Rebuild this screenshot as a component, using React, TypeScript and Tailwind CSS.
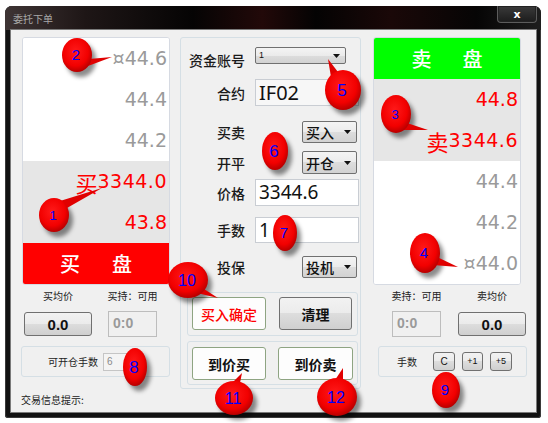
import React from "react";

const CJK = "font-['Noto_Sans_CJK_SC',sans-serif]";
const NUM = "font-['DejaVu_Sans',sans-serif]";

function Arrow() {
  return (
    <svg width="7" height="4" viewBox="0 0 7 4" className="shrink-0">
      <path d="M0 0h7L3.5 4z" fill="#111" />
    </svg>
  );
}

function Combo({ text, cls, textCls }: { text: string; cls: string; textCls: string }) {
  return (
    <div
      className={`flex items-center justify-between border border-[#707070] rounded-[2px] bg-[linear-gradient(#f4f4f4,#ebebeb_50%,#dddddd_50%,#d2d2d2)] pl-[3px] pr-[5px] ${cls}`}
    >
      <span className={textCls}>{text}</span>
      <Arrow />
    </div>
  );
}

function PriceRow({ children, bg }: { children: React.ReactNode; bg: string }) {
  return (
    <div className={`h-[41px] flex items-center justify-end pr-[2px] ${bg}`}>{children}</div>
  );
}

function GrayBtn({ children, cls }: { children: React.ReactNode; cls: string }) {
  return (
    <div
      className={`flex items-center justify-center border border-[#707070] rounded-[3px] bg-[linear-gradient(#f2f2f2,#ebebeb_50%,#dddddd_50%,#cfcfcf)] ${cls}`}
    >
      {children}
    </div>
  );
}

type B = {
  cx: number;
  cy: number;
  rx: number;
  ry: number;
  n: string;
  fs: number;
  tail?: string;
};

const badges: B[] = [
  { cx: 54, cy: 215, rx: 15, ry: 17, n: "1", fs: 13, tail: "60,201 67,208 102,188" },
  { cx: 77, cy: 55, rx: 15, ry: 17, n: "2", fs: 15, tail: "89,59 88,66 112,57" },
  { cx: 396, cy: 114, rx: 15, ry: 19, n: "3", fs: 13, tail: "407,123 403,130 428,130" },
  { cx: 425, cy: 253, rx: 15, ry: 20, n: "4", fs: 15, tail: "437,257 433,265 458,267" },
  { cx: 343, cy: 90, rx: 18, ry: 20, n: "5", fs: 17, tail: "331,77 338,72 328,59" },
  { cx: 275, cy: 151, rx: 13, ry: 19, n: "6", fs: 17 },
  { cx: 285, cy: 233, rx: 12, ry: 18, n: "7", fs: 15 },
  { cx: 135, cy: 367, rx: 12, ry: 19, n: "8", fs: 17 },
  { cx: 446, cy: 390, rx: 14, ry: 18, n: "9", fs: 15 },
  { cx: 188, cy: 280, rx: 20, ry: 18, n: "10", fs: 16, tail: "197,293 204,289 218,298" },
  { cx: 234, cy: 398, rx: 19, ry: 17, n: "11", fs: 16, tail: "233,382 240,383 242,373" },
  { cx: 337, cy: 397, rx: 20, ry: 19, n: "12", fs: 16, tail: "335,380 343,380 343,368" },
];

function Badges() {
  return (
    <svg
      className="absolute left-0 top-0 pointer-events-none"
      width="548"
      height="423"
      viewBox="0 0 548 423"
    >
      <defs>
        <radialGradient id="rg" cx="45%" cy="40%" r="60%">
          <stop offset="0%" stopColor="#ff1a1a" />
          <stop offset="70%" stopColor="#f20000" />
          <stop offset="100%" stopColor="#b80000" />
        </radialGradient>
        <filter id="blur" x="-50%" y="-50%" width="200%" height="200%">
          <feGaussianBlur stdDeviation="2.2" />
        </filter>
      </defs>
      {badges.map((b) => (
        <g key={b.n}>
          <ellipse
            cx={b.cx + 4}
            cy={b.cy + 5}
            rx={b.rx}
            ry={b.ry}
            fill="rgba(0,0,0,0.45)"
            filter="url(#blur)"
          />
          {b.tail && <polygon points={b.tail} fill="#e00000" />}
          <ellipse cx={b.cx} cy={b.cy} rx={b.rx} ry={b.ry} fill="url(#rg)" />
          <text
            x={b.cx - 1}
            y={b.cy + b.fs * 0.36}
            textAnchor="middle"
            fontSize={b.fs}
            fill="#0000ff"
            fontFamily="Liberation Sans, Arial, sans-serif"
          >
            {b.n}
          </text>
        </g>
      ))}
    </svg>
  );
}

export default function App() {
  return (
    <div className="relative w-[548px] h-[423px] bg-white overflow-hidden">
      <div className="pt-[6px] pl-[5px]">
        <div className="w-[536px] h-[412px] rounded-t-[7px] rounded-b-[3px] bg-[#121212] flex flex-col shadow-[inset_0_0_0_1px_#3a3a3a]">
          {/* title bar */}
          <div className="h-[24px] flex items-start justify-between rounded-t-[7px] bg-[linear-gradient(90deg,#3e3434_0%,#1e1616_15%,#050404_35%,#220909_48%,#040303_58%,#1a0808_72%,#060505_88%,#1e1e1e_100%)]">
            <span className={`${CJK} text-[10px] leading-none text-[#a8a8a8] ml-[8px] mt-[8px]`}>
              委托下单
            </span>
            <div className="mr-[4px] w-[40px] h-[17px] rounded-b-[4px] border border-t-0 border-[#5c5c5c] bg-[linear-gradient(#3a3a3a,#1c1c1c)] flex items-center justify-center shadow-[inset_0_0_0_1px_#222]">
              <span className="font-['DejaVu_Sans',sans-serif] text-[11px] font-bold text-white leading-none">
                x
              </span>
            </div>
          </div>
          {/* client */}
          <div className="ml-[6px] w-[525px] h-[382px] bg-[#f0f0f0] shadow-[0_0_0_1px_#7a7a7a] flex pt-[7px] pl-[10px]">
            {/* left column */}
            <div className="w-[149px] flex flex-col">
              <div className="ml-[1px] w-[148px] h-[248px] border border-[#d6dae2] rounded-[3px] bg-white flex flex-col overflow-hidden">
                <PriceRow bg="bg-white">
                  <span className={`${NUM} text-[19px] text-[#9a9a9a] leading-none`}>¤44.6</span>
                </PriceRow>
                <PriceRow bg="bg-white">
                  <span className={`${NUM} text-[19px] text-[#9a9a9a] leading-none`}>44.4</span>
                </PriceRow>
                <PriceRow bg="bg-white">
                  <span className={`${NUM} text-[19px] text-[#9a9a9a] leading-none`}>44.2</span>
                </PriceRow>
                <PriceRow bg="bg-[#e6e6e6]">
                  <span className={`${CJK} text-[22px] text-[#ff0000] leading-none`}>买</span>
                  <span className={`${NUM} text-[19px] text-[#ff0000] leading-none tracking-[0.5px]`}>3344.0</span>
                </PriceRow>
                <PriceRow bg="bg-[#e6e6e6]">
                  <span className={`${NUM} text-[19px] text-[#ff0000] leading-none`}>43.8</span>
                </PriceRow>
                <div className="h-[41px] bg-[#ff0000] flex items-center justify-center gap-[32px]">
                  <span className={`${CJK} text-[20px] font-medium text-white leading-none`}>买</span>
                  <span className={`${CJK} text-[20px] font-medium text-white leading-none`}>盘</span>
                </div>
              </div>
              <div className="flex mt-[5px]">
                <div className="ml-[3px] w-[68px] flex flex-col items-center">
                  <span className={`${CJK} text-[10px] leading-[12px] text-[#222]`}>买均价</span>
                  <GrayBtn cls="mt-[10px] w-[68px] h-[24px]">
                    <span className="font-['Liberation_Sans',sans-serif] font-bold text-[15px] text-[#111] leading-none">
                      0.0
                    </span>
                  </GrayBtn>
                </div>
                <div className="ml-[16px] w-[49px] flex flex-col items-center">
                  <span className={`${CJK} text-[10px] leading-[12px] text-[#222] whitespace-nowrap`}>
                    买持：可用
                  </span>
                  <div className="mt-[9px] w-[49px] h-[26px] border border-[#bdbdbd] bg-[#f0f0f0] pl-[4px] pt-[4px]">
                    <span className="block font-['Liberation_Sans',sans-serif] font-bold text-[14px] text-[#9a9a9a] leading-none">
                      0:0
                    </span>
                  </div>
                </div>
              </div>
              <div className="mt-[9px] w-[149px] h-[31px] border border-[#d5dfe5] rounded-[3px] flex items-center pl-[26px]">
                <span className={`${CJK} text-[10px] leading-none text-[#222]`}>可开仓手数</span>
                <div className="ml-[5px] w-[24px] h-[18px] border border-[#c5c5c5] bg-[#f4f4f4] flex items-center pl-[3px]">
                  <span className="font-['Liberation_Sans',sans-serif] text-[10px] text-[#8a8a8a] leading-none">6</span>
                </div>
              </div>
              <span className={`${CJK} text-[10px] leading-none text-[#222] mt-[18px]`}>交易信息提示:</span>
            </div>

            {/* middle column */}
            <div className="ml-[10px] w-[181px] h-[352px] border border-[#d5dfe5] rounded-[3px] flex flex-col">
              <div className="mt-[9px] h-[20px] flex">
                <span className={`${CJK} w-[64px] text-right self-end text-[14px] leading-[14px] text-[#1a1a1a] font-medium`}>
                  资金账号
                </span>
                <Combo
                  text="1"
                  cls="ml-[10px] w-[91px] h-[17px]"
                  textCls="font-['Liberation_Sans',sans-serif] text-[9px] leading-none text-[#111]"
                />
              </div>
              <div className="mt-[12px] h-[27px] flex items-center">
                <span className={`${CJK} w-[64px] text-right text-[14px] leading-[14px] text-[#1a1a1a] font-medium`}>
                  合约
                </span>
                <div className="ml-[10px] w-[104px] h-[27px] border border-[#c9cdd3] bg-[#f7f7f7] flex items-center pl-[3px]">
                  <span className="font-['Noto_Sans',sans-serif] text-[20px] leading-none text-[#111]">IF02</span>
                </div>
              </div>
              <div className="mt-[15px] h-[22px] flex items-center">
                <span className={`${CJK} w-[64px] text-right text-[14px] leading-[14px] text-[#1a1a1a] font-medium`}>
                  买卖
                </span>
                <Combo
                  text="买入"
                  cls="ml-[57px] w-[55px] h-[22px]"
                  textCls={`${CJK} text-[14px] leading-none text-[#111] font-medium`}
                />
              </div>
              <div className="mt-[8px] h-[23px] flex items-center">
                <span className={`${CJK} w-[64px] text-right text-[14px] leading-[14px] text-[#1a1a1a] font-medium`}>
                  开平
                </span>
                <Combo
                  text="开仓"
                  cls="ml-[57px] w-[55px] h-[23px]"
                  textCls={`${CJK} text-[14px] leading-none text-[#111] font-medium`}
                />
              </div>
              <div className="mt-[5px] h-[27px] flex items-center">
                <span className={`${CJK} w-[64px] text-right text-[14px] leading-[14px] text-[#1a1a1a] font-medium`}>
                  价格
                </span>
                <div className="ml-[10px] w-[104px] h-[27px] border border-[#c9cdd3] bg-white flex items-center pl-[3px]">
                  <span className="font-['Noto_Sans',sans-serif] text-[19px] leading-none text-[#111]">3344.6</span>
                </div>
              </div>
              <div className="mt-[11px] h-[26px] flex items-center">
                <span className={`${CJK} w-[64px] text-right text-[14px] leading-[14px] text-[#1a1a1a] font-medium`}>
                  手数
                </span>
                <div className="ml-[10px] w-[104px] h-[26px] border border-[#c9cdd3] bg-white flex items-center pl-[3px]">
                  <span className="font-['Noto_Sans',sans-serif] text-[19px] leading-none text-[#111]">1</span>
                </div>
              </div>
              <div className="mt-[13px] h-[22px] flex items-center">
                <span className={`${CJK} w-[64px] text-right text-[14px] leading-[14px] text-[#1a1a1a] font-medium`}>
                  投保
                </span>
                <Combo
                  text="投机"
                  cls="ml-[57px] w-[55px] h-[22px]"
                  textCls={`${CJK} text-[14px] leading-none text-[#111] font-medium`}
                />
              </div>
              <div className="mt-[14px] ml-[6px] w-[171px] h-[44px] border border-[#d5dfe5] rounded-[3px] flex items-start pt-[4px] pl-[4px]">
                <div className="w-[74px] h-[33px] border border-[#8ea482] rounded-[3px] bg-[#fdfdfd] flex items-center justify-center">
                  <span className={`${CJK} text-[14px] leading-none text-[#ff0000] font-medium`}>买入确定</span>
                </div>
                <GrayBtn cls="ml-[13px] w-[73px] h-[33px]">
                  <span className={`${CJK} text-[14px] leading-none text-[#111] font-bold`}>清理</span>
                </GrayBtn>
              </div>
              <div className="mt-[5px] ml-[6px] w-[171px] h-[44px] border border-[#d5dfe5] rounded-[3px] flex items-start pt-[5px] pl-[4px]">
                <div className="w-[74px] h-[33px] border border-[#8ea482] rounded-[3px] bg-[#fdfdfd] flex items-center justify-center">
                  <span className={`${CJK} text-[14px] leading-none text-[#111] font-bold`}>到价买</span>
                </div>
                <div className="ml-[12px] w-[75px] h-[33px] border border-[#8ea482] rounded-[3px] bg-[#fdfdfd] flex items-center justify-center">
                  <span className={`${CJK} text-[14px] leading-none text-[#111] font-bold`}>到价卖</span>
                </div>
              </div>
            </div>

            {/* right column */}
            <div className="ml-[12px] w-[154px] flex flex-col">
              <div className="w-[148px] h-[248px] border border-[#d6dae2] rounded-[3px] bg-white flex flex-col overflow-hidden">
                <div className="h-[41px] bg-[#00ff00] flex items-center justify-center gap-[31px]">
                  <span className={`${CJK} text-[20px] font-medium text-white leading-none`}>卖</span>
                  <span className={`${CJK} text-[20px] font-medium text-white leading-none`}>盘</span>
                </div>
                <PriceRow bg="bg-[#e6e6e6]">
                  <span className={`${NUM} text-[19px] text-[#ff0000] leading-none`}>44.8</span>
                </PriceRow>
                <PriceRow bg="bg-[#e6e6e6]">
                  <span className={`${CJK} text-[22px] text-[#ff0000] leading-none`}>卖</span>
                  <span className={`${NUM} text-[19px] text-[#ff0000] leading-none tracking-[0.5px]`}>3344.6</span>
                </PriceRow>
                <PriceRow bg="bg-white">
                  <span className={`${NUM} text-[19px] text-[#9a9a9a] leading-none`}>44.4</span>
                </PriceRow>
                <PriceRow bg="bg-white">
                  <span className={`${NUM} text-[19px] text-[#9a9a9a] leading-none`}>44.2</span>
                </PriceRow>
                <PriceRow bg="bg-white">
                  <span className={`${NUM} text-[19px] text-[#9a9a9a] leading-none`}>¤44.0</span>
                </PriceRow>
              </div>
              <div className="flex mt-[5px] ml-[5px]">
                <div className="ml-[14px] w-[49px] flex flex-col items-center">
                  <span className={`${CJK} text-[10px] leading-[12px] text-[#222] whitespace-nowrap`}>
                    卖持：可用
                  </span>
                  <div className="mt-[9px] w-[49px] h-[26px] border border-[#bdbdbd] bg-[#f0f0f0] pl-[4px] pt-[4px]">
                    <span className="block font-['Liberation_Sans',sans-serif] font-bold text-[14px] text-[#9a9a9a] leading-none">
                      0:0
                    </span>
                  </div>
                </div>
                <div className="ml-[17px] w-[68px] flex flex-col items-center">
                  <span className={`${CJK} text-[10px] leading-[12px] text-[#222]`}>卖均价</span>
                  <GrayBtn cls="mt-[10px] w-[68px] h-[24px]">
                    <span className="font-['Liberation_Sans',sans-serif] font-bold text-[15px] text-[#111] leading-none">
                      0.0
                    </span>
                  </GrayBtn>
                </div>
              </div>
              <div className="mt-[9px] ml-[5px] w-[149px] h-[31px] border border-[#d5dfe5] rounded-[3px] flex items-center pl-[18px]">
                <span className={`${CJK} text-[10px] leading-none text-[#222]`}>手数</span>
                <GrayBtn cls="ml-[16px] w-[22px] h-[19px] rounded-[2px]">
                  <span className="font-['Liberation_Sans',sans-serif] text-[10px] leading-none text-[#111]">C</span>
                </GrayBtn>
                <GrayBtn cls="ml-[7px] w-[21px] h-[19px] rounded-[2px]">
                  <span className="font-['Liberation_Sans',sans-serif] text-[9px] leading-none text-[#111]">+1</span>
                </GrayBtn>
                <GrayBtn cls="ml-[7px] w-[22px] h-[19px] rounded-[2px]">
                  <span className="font-['Liberation_Sans',sans-serif] text-[9px] leading-none text-[#111]">+5</span>
                </GrayBtn>
              </div>
            </div>
          </div>
        </div>
      </div>
      <Badges />
    </div>
  );
}
